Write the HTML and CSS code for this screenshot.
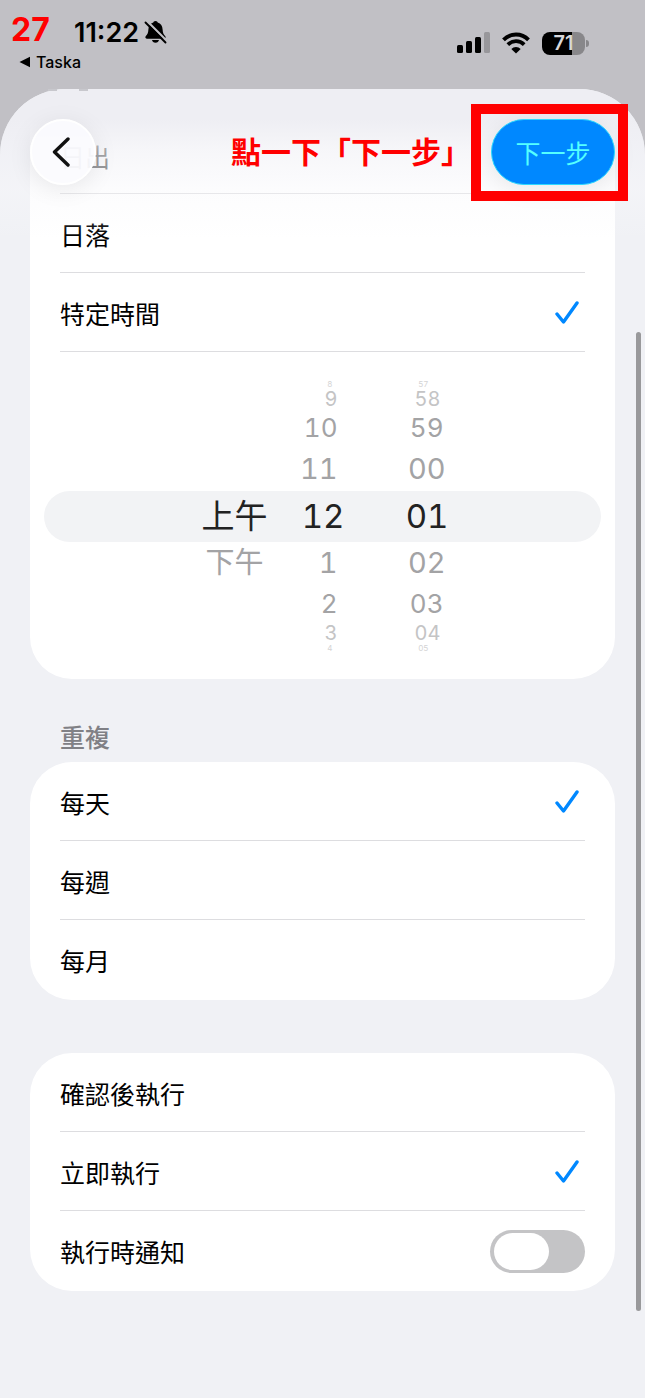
FILE: index.html
```html
<!DOCTYPE html>
<html lang="zh-Hant">
<head>
    <meta charset="UTF-8">
    <meta name="viewport" content="width=device-width, initial-scale=1.0">
    <title>特定時間</title>
    <link rel="stylesheet" href="styles.css">
</head>
<body>
    <div class="status-bar">
        <div class="status-left">
            <div class="clock-row">
                <span class="step-number">27</span>
                <span class="clock">11:22</span>
                <svg class="bell" width="24" height="24" viewBox="0 0 24 24">
                    <path d="M11.500 1c1.500 0 2 .8 2.200 1.600 3.200 1 4.700 3.600 4.900 7 .2 3.600 1 5 2.500 6.500 1 1 .6 2.600-.9 2.600H2.800c-1.500 0-1.900-1.600-.9-2.600 1.500-1.500 2.300-2.900 2.500-6.500.2-3.400 1.700-6 4.900-7C9.500 1.800 10 1 11.500 1z"/>
                    <path d="M8 20h7c-.3 1.600-1.600 2.700-3.500 2.700S8.300 21.600 8 20z"/>
                    <path d="M3.200 1.200l20 20" stroke="#c1c0c5" stroke-width="2.200"/>
                    <path d="M1.500 2.500l20 20" stroke="#000" stroke-width="1.900" stroke-linecap="round"/>
                </svg>
            </div>
            <a class="back-app" href="#">
                <svg width="12" height="12" viewBox="0 0 12 12"><path d="M.5 6L11 .8v10.400z"/></svg>
                Taska
            </a>
        </div>
        <div class="status-right">
            <svg width="33" height="22" viewBox="0 0 33 22">
                <rect x="0" y="13" width="6" height="8" rx="1.500"/>
                <rect x="9" y="9" width="6" height="12" rx="1.500"/>
                <rect x="18" y="5" width="6" height="16" rx="1.500"/>
                <rect x="27" y="0" width="6" height="21" rx="1.500" fill="#98979b"/>
            </svg>
            <svg width="28" height="22" viewBox="0 0 28 22">
                <path d="M1.500 7.800a17.500 17.500 0 0 1 25 0" fill="none" stroke="#000" stroke-width="3.900"/>
                <path d="M5.800 12.600a11.500 11.500 0 0 1 16.400 0" fill="none" stroke="#000" stroke-width="3.700"/>
                <path d="M14 21.500l-4.700-4.500a6.500 6.500 0 0 1 9.400 0z"/>
            </svg>
            <div class="battery"><span class="battery-level">71</span></div>
        </div>
    </div>

    <main class="sheet">
        <header class="sheet-header">
            <button class="back-button" type="button" aria-label="返回">
                <svg width="20" height="30" viewBox="0 0 20 30">
                    <path d="M17 2L3.500 15 17 28" fill="none" stroke="#111" stroke-width="3.400" stroke-linecap="round" stroke-linejoin="round"/>
                </svg>
            </button>
            <h1 class="hint">點一下「下一步」</h1>
            <div class="next-wrap">
                <button class="next-button" type="button">下一步</button>
            </div>
        </header>

        <section class="card card-time">
            <label class="row row-first">
                日出
                <input type="radio" name="time">
                <svg class="check" width="24" height="24" viewBox="0 0 24 24"><path d="M2 13l6.500 8L22 2"/></svg>
            </label>
            <label class="row">
                日落
                <input type="radio" name="time">
                <svg class="check" width="24" height="24" viewBox="0 0 24 24"><path d="M2 13l6.500 8L22 2"/></svg>
            </label>
            <label class="row">
                特定時間
                <input type="radio" name="time" checked>
                <svg class="check" width="24" height="24" viewBox="0 0 24 24"><path d="M2 13l6.500 8L22 2"/></svg>
            </label>
            <div class="picker">
                <ul class="wheel wheel-period">
                    <li class="edge"></li>
                    <li class="far"></li>
                    <li class="mid"></li>
                    <li class="near"></li>
                    <li class="current">上午</li>
                    <li class="near">下午</li>
                    <li class="mid"></li>
                    <li class="far"></li>
                    <li class="edge"></li>
                </ul>
                <ul class="wheel wheel-hour">
                    <li class="edge">8</li>
                    <li class="far">9</li>
                    <li class="mid">10</li>
                    <li class="near">11</li>
                    <li class="current">12</li>
                    <li class="near">1</li>
                    <li class="mid">2</li>
                    <li class="far">3</li>
                    <li class="edge">4</li>
                </ul>
                <ul class="wheel wheel-minute">
                    <li class="edge">57</li>
                    <li class="far">58</li>
                    <li class="mid">59</li>
                    <li class="near">00</li>
                    <li class="current">01</li>
                    <li class="near">02</li>
                    <li class="mid">03</li>
                    <li class="far">04</li>
                    <li class="edge">05</li>
                </ul>
            </div>
        </section>

        <h2 class="section-title">重複</h2>
        <section class="card">
            <label class="row">
                每天
                <input type="radio" name="repeat" checked>
                <svg class="check" width="24" height="24" viewBox="0 0 24 24"><path d="M2 13l6.500 8L22 2"/></svg>
            </label>
            <label class="row">
                每週
                <input type="radio" name="repeat">
                <svg class="check" width="24" height="24" viewBox="0 0 24 24"><path d="M2 13l6.500 8L22 2"/></svg>
            </label>
            <label class="row">
                每月
                <input type="radio" name="repeat">
                <svg class="check" width="24" height="24" viewBox="0 0 24 24"><path d="M2 13l6.500 8L22 2"/></svg>
            </label>
        </section>

        <section class="card card-run">
            <label class="row">
                確認後執行
                <input type="radio" name="run">
                <svg class="check" width="24" height="24" viewBox="0 0 24 24"><path d="M2 13l6.500 8L22 2"/></svg>
            </label>
            <label class="row">
                立即執行
                <input type="radio" name="run" checked>
                <svg class="check" width="24" height="24" viewBox="0 0 24 24"><path d="M2 13l6.500 8L22 2"/></svg>
            </label>
            <label class="row">
                執行時通知
                <input class="switch" type="checkbox">
            </label>
        </section>
        <div class="scrollbar"></div>
    </main>
</body>
</html>
```
FILE: styles.css
```css
* {
    box-sizing: border-box;
}
body {
    margin: 0;
    min-height: 100vh;
    display: flex;
    flex-direction: column;
    background-color: #c1c0c5;
    color: #000;
    font-family: Inter, "Noto Sans CJK TC", sans-serif;
    font-size: 25px;
}
button {
    border: none;
    padding: 0;
    font-family: inherit;
    cursor: pointer;
}

/* status bar */
.status-bar {
    display: flex;
    justify-content: space-between;
    height: 89px;
    padding: 12px 60px 0 11px;
}
.clock-row {
    display: flex;
    align-items: center;
    height: 40px;
}
.step-number {
    width: 63px;
    font-size: 32px;
    font-weight: 700;
    line-height: 36px;
    margin-bottom: 4px;
    color: #f00;
}
.clock {
    font-size: 27px;
    font-weight: 600;
}
.bell {
    margin-left: 5px;
}
.back-app {
    display: flex;
    align-items: center;
    gap: 5px;
    padding-left: 8px;
    font-size: 16px;
    font-weight: 500;
    line-height: 20px;
    color: #000;
    text-decoration: none;
}
.status-right {
    display: flex;
    align-items: flex-start;
    gap: 12px;
    padding-top: 20px;
}
.battery {
    position: relative;
    width: 43px;
    height: 23px;
    border-radius: 8px;
    background: linear-gradient(to right, #000 70%, #88878a 70%);
    text-align: center;
}
.battery::after {
    content: "";
    position: absolute;
    right: -4px;
    top: 8px;
    width: 3px;
    height: 7px;
    border-radius: 0 3px 3px 0;
    background: #88878a;
}
.battery-level {
    display: block;
    font-size: 20px;
    font-weight: 600;
    line-height: 23px;
    color: #d8d8dc;
}

/* sheet */
.sheet {
    position: relative;
    flex: 1;
    padding: 30px 30px 107px;
    border-radius: 66px 66px 0 0;
    background-color: #f0f1f5;
}
.sheet-header {
    position: absolute;
    z-index: 1;
    top: 0;
    left: 0;
    right: 0;
    height: 150px;
    display: flex;
    align-items: flex-start;
    padding: 30px 30px 0;
    border-radius: 66px 66px 0 0;
    background: linear-gradient(#eeeef3 0, #eeeef3 20%, rgba(241, 241, 246, 0.6) 42%, rgba(248, 248, 251, 0.4) 68%, rgba(255, 255, 255, 0) 100%);
}
/* heading scrolled away under the top edge */
.sheet-header::before {
    content: "";
    position: absolute;
    top: 0;
    left: 48px;
    width: 9px;
    height: 2px;
    background-color: #c8c8cd;
    box-shadow: 31px 0 #c8c8cd;
}
.back-button {
    width: 66px;
    height: 66px;
    display: flex;
    align-items: center;
    justify-content: center;
    padding-right: 4px;
    border: 2px solid #fff;
    border-radius: 50%;
    background-color: rgba(251, 251, 254, 0.93);
    box-shadow: 0 4px 24px rgba(0, 0, 0, 0.08);
}
.hint {
    margin: 0 20px 0 auto;
    font-size: 30px;
    font-weight: 700;
    line-height: 66px;
    color: #f00;
}
.next-wrap {
    position: relative;
}
.next-wrap::after {
    content: "";
    position: absolute;
    inset: -15px -13px -16px -20px;
    border: 10px solid #f00;
    pointer-events: none;
}
.next-button {
    width: 124px;
    height: 66px;
    border: 1px solid #2cd8ff;
    border-radius: 33px;
    background-color: #0088ff;
    box-shadow: 0 4px 24px rgba(0, 0, 0, 0.08);
    color: #5ff;
    font-size: 25px;
}

/* cards */
.card {
    padding-bottom: 1px;
    border-radius: 42px;
    background-color: #fff;
}
.card-time {
    border-radius: 0 0 42px 42px;
}
.card-run {
    margin-top: 53px;
}
.row {
    display: flex;
    align-items: center;
    justify-content: space-between;
    height: 79px;
    margin: 0 30px;
    border-bottom: 1px solid #dddde0;
    padding-top: 1px;
}
.row:last-child {
    border-bottom: none;
}
.row-first {
    height: 75px;
    padding-top: 0;
    color: #333;
}
.row input[type="radio"] {
    appearance: none;
    width: 0;
    margin: 0;
}
.check {
    display: none;
    margin-right: 6px;
    fill: none;
    stroke: #0088ff;
    stroke-width: 3.4;
    stroke-linecap: round;
    stroke-linejoin: round;
}
input:checked + .check {
    display: block;
}
.section-title {
    margin: 41px 30px 6px;
    font-size: 25px;
    font-weight: 500;
    line-height: 36px;
    color: #808085;
}

/* time picker */
.picker {
    position: relative;
    display: flex;
    justify-content: center;
    gap: 26px;
    margin: 0 14px;
    padding: 28px 0 26px;
}
.picker::before {
    content: "";
    position: absolute;
    top: 139px;
    left: 0;
    right: 0;
    height: 51px;
    border-radius: 26px;
    background-color: #f2f3f5;
}
.wheel {
    position: relative;
    margin: 0;
    padding: 0;
    list-style: none;
    color: #a3a3a5;
    font-variant-numeric: tabular-nums;
    white-space: nowrap;
}
.wheel-period {
    width: 76px;
    text-align: center;
}
.wheel-hour {
    width: 46px;
    text-align: right;
}
.wheel-minute {
    width: 78px;
    text-align: right;
}
.edge {
    height: 8px;
    font-size: 8px;
    line-height: 8px;
    color: #d4d4d5;
}
.far {
    height: 22px;
    font-size: 20px;
    line-height: 22px;
    color: #c4c4c5;
}
.mid {
    height: 36px;
    font-size: 26px;
    line-height: 36px;
}
.near {
    height: 46px;
    font-size: 29px;
    line-height: 46px;
}
.current {
    height: 48px;
    font-size: 33px;
    line-height: 48px;
    color: #222;
}
.wheel-hour li {
    padding-right: 7px;
}
.wheel-minute .near {
    padding-right: 3px;
}
.wheel-minute .mid {
    padding-right: 5px;
}
.wheel-minute .far {
    padding-right: 8px;
}
.wheel-hour .edge {
    padding-right: 12px;
}
.wheel-minute .edge {
    padding-right: 20px;
}
.wheel-hour .current {
    padding-right: 0;
}

.switch {
    appearance: none;
    width: 95px;
    height: 43px;
    margin: 0;
    padding: 3px 4px;
    border-radius: 22px;
    background-color: #c4c4c6;
    cursor: pointer;
}
.switch::before {
    content: "";
    display: block;
    width: 55px;
    height: 37px;
    border-radius: 19px;
    background-color: #fff;
}
.switch:checked {
    background-color: #34c759;
}
.switch:checked::before {
    margin-left: auto;
}

.scrollbar {
    position: absolute;
    top: 243px;
    right: 4px;
    bottom: 87px;
    width: 5px;
    border-radius: 3px;
    background-color: #99999b;
}
```
